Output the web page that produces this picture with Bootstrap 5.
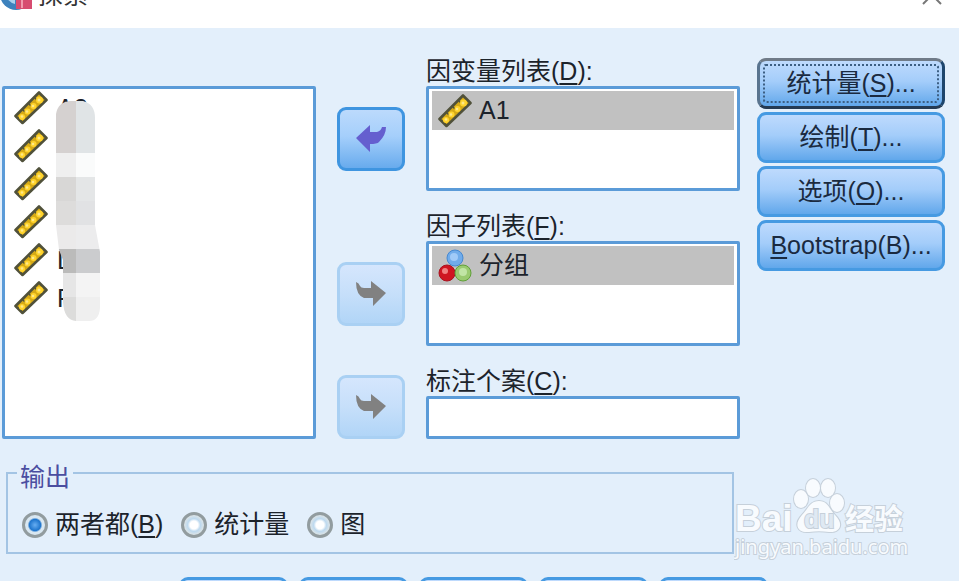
<!DOCTYPE html>
<html lang="zh-CN">
<head>
<meta charset="utf-8">
<meta name="viewport" content="width=device-width, initial-scale=1">
<title>探索</title>
<link href="https://cdn.jsdelivr.net/npm/bootstrap@5.3.0/dist/css/bootstrap.min.css" rel="stylesheet">
<style>
  body { background: #e3effb; font-family: "Liberation Sans", "Noto Sans CJK SC", sans-serif; font-size: 25px; line-height: 29px; color: #1c232b; }
  u { text-decoration-thickness: 2px; text-underline-offset: 3px; text-decoration-skip-ink: none; }
  .title-strip { height: 28px; padding-bottom: 18px; color: #333; }
  .title-strip button { line-height: 0; padding-right: 17px; }
  .dialog-body { padding: 29px 14px 0 2px; gap: 17px; }
  .transfer { display: grid; grid-template-columns: minmax(0, 1fr) 68px minmax(0, 1fr); grid-template-rows: 134px 134px 72px; gap: 21px; }
  .source { grid-row: 1 / 4; margin-top: 29px; }
  .well { background: #fff; border: 3px solid #5b9bd8; border-radius: 2px; }
  .pick-list { height: 105px; }
  .source li { height: 38px; padding-left: 9px; gap: 9px; }
  .mosaic { left: 51px; top: 11px; }
  .picked { background: #c1c1c1; height: 39px; margin: 2px 3px 0; padding-left: 6px; gap: 7px; }
  .case-input { height: 43px; padding: 0 8px; }
  .case-input:focus { outline: none; }
  .move { height: 64px; border: 3px solid #3f95e0; border-radius: 9px; background: linear-gradient(#bcdafc, #a5cffb 45%, #68abed); align-self: start; margin-top: 50px; }
  .move:disabled { border-color: #a9d0f3; background: linear-gradient(#d5e6fd, #c6dffa 50%, #b1d5f7); }
  .move.last { align-self: end; margin-top: 0; }
  .side { width: 188px; gap: 3px; padding-top: 1px; }
  .glossy { height: 51px; border: 3px solid #469ae2; border-radius: 9px; color: #1a2a40; background: linear-gradient(#bedafd, #a4cdfa 45%, #61a7eb); }
  .glossy.current { border-color: #707b88 #1d456c #253b53 #59748f; outline: 2px dotted #3c5f83; outline-offset: -8px; }
  .output { border: 2px solid #a3c4e4; margin: 19px 6px 0 4px; padding: 0 14px 13px; }
  .output legend { color: #4b4ea0; font-size: 25px; line-height: 19px; padding: 10px 3px 0; margin-left: -5px; margin-bottom: 23px; }
  .output input { appearance: none; width: 26px; height: 26px; border: 3px solid #929c9f; border-radius: 50%; background: radial-gradient(#fff 0 28%, #bdd9ef 45%, #dce4e7 70%); }
  .output input:checked { background: radial-gradient(#67aef2 0, #1e75cd 40%, #d9e7f1 52%); }
  .output label { gap: 7px; }
  .output .choices { gap: 18px; }
  .actions { gap: 11px; padding: 23px 13px 0 0; }
  .actions button { width: 109px; }
  .brand-overlay { right: 49px; bottom: 18px; }
</style>
<script src="https://cdn.jsdelivr.net/npm/bootstrap@5.3.0/dist/js/bootstrap.bundle.min.js"></script>
</head>
<body class="vh-100 overflow-hidden position-relative">
<svg class="d-none">
  <symbol id="ruler" viewBox="0 0 34 34">
    <path d="M25 1.500 32.500 9 8.500 32 1.500 25Z" fill="#d6aa16" stroke="#50513a" stroke-width="2.600" stroke-linejoin="round"/>
    <path d="M21 7l2 2M15 13l2 2M9 19l2 2" stroke="#50513a" stroke-width="1.500"/>
    <g fill="#ffd42e"><circle cx="25.500" cy="9" r="3.500"/><circle cx="19.500" cy="15" r="3"/><circle cx="13.500" cy="20.500" r="3"/><circle cx="8" cy="26" r="3"/></g>
    <g fill="#ffe98a"><circle cx="25" cy="9" r="1.500"/><circle cx="19" cy="15" r="1.300"/><circle cx="13" cy="20.500" r="1.300"/><circle cx="8" cy="25.500" r="1.300"/></g>
  </symbol>
  <symbol id="forward" viewBox="0 0 32 28"><path d="M1 2Q4 3 5 6 6 8 9 8H16V1L31 13 18 26V18H9Q1 15 1 2Z" fill="#818181"/></symbol>
</svg>

<header class="title-strip bg-white d-flex align-items-end justify-content-between overflow-hidden">
  <div class="d-flex align-items-end">
    <svg width="38" height="32" viewBox="0 0 38 32"><circle cx="16" cy="16" r="16" fill="#3d82bd"/><path d="M3 15q6 10 12 11V5Z" fill="#a7d2ef"/><path d="M16 14h16v17H16Z" fill="#d74c70"/><path d="M17 21h14M22 15v15" stroke="#f09aae" stroke-width="2"/></svg>
    <span>探索</span>
  </div>
  <button type="button" class="border-0 bg-transparent" aria-label="关闭"><svg width="20" height="26" viewBox="0 0 20 26"><path d="M1 3l18 18M19 3 1 21" stroke="#777" stroke-width="2"/></svg></button>
</header>

<main class="dialog-body d-flex align-items-start">
  <div class="flex-grow-1">
    <div class="transfer">
      <div class="source well position-relative">
        <ul class="list-unstyled m-0">
          <li class="d-flex align-items-center"><svg width="34" height="34"><use href="#ruler"/></svg>A2</li>
          <li class="d-flex align-items-center"><svg width="34" height="34"><use href="#ruler"/></svg></li>
          <li class="d-flex align-items-center"><svg width="34" height="34"><use href="#ruler"/></svg></li>
          <li class="d-flex align-items-center"><svg width="34" height="34"><use href="#ruler"/></svg></li>
          <li class="d-flex align-items-center"><svg width="34" height="34"><use href="#ruler"/></svg>L</li>
          <li class="d-flex align-items-center"><svg width="34" height="34"><use href="#ruler"/></svg>F</li>
        </ul>
        <svg class="mosaic position-absolute" width="45" height="223" viewBox="0 0 45 223">
          <clipPath id="stroke-shape"><path d="M0 14Q2 2 14 1H27Q39 4 39 18V125L44 152V208Q43 221 33 221H20Q8 220 7 202V160L3 150 0 125Z"/></clipPath>
          <g clip-path="url(#stroke-shape)">
            <path fill="#d5d1d0" d="M0 0h20v53H0z"/><path fill="#e0e4e6" d="M20 0h25v53H20z"/>
            <path fill="#efefef" d="M0 53h20v24H0z"/><path fill="#fafbfb" d="M20 53h25v24H20z"/>
            <path fill="#d8d7d6" d="M0 77h20v24H0z"/><path fill="#e4e6e7" d="M20 77h25v24H20z"/>
            <path fill="#dddcdb" d="M0 101h20v24H0z"/><path fill="#e1e2e4" d="M20 101h25v24H20z"/>
            <path fill="#ebeaea" d="M0 125h20v24H0z"/><path fill="#ececed" d="M20 125h25v24H20z"/>
            <path fill="#bbbbba" d="M0 149h20v24H0z"/><path fill="#cbccce" d="M20 149h25v24H20z"/>
            <path fill="#e6e6e6" d="M0 173h20v24H0z"/><path fill="#f4f4f4" d="M20 173h25v24H20z"/>
            <path fill="#dcdcdb" d="M0 197h20v26H0z"/><path fill="#efefef" d="M20 197h25v26H20z"/>
          </g>
        </svg>
      </div>

      <button type="button" class="move d-flex align-items-center justify-content-center" aria-label="移出"><svg width="32" height="30" viewBox="0 0 32 30"><path d="M1 14 15 1V8H22Q26 7 27 3H31Q31 11 24 18 22 20 15 20V28Z" fill="#655fcf"/></svg></button>
      <section>
        <div id="dep">因变量列表(<u>D</u>):</div>
        <div class="well pick-list" role="listbox" aria-labelledby="dep">
          <div class="picked d-flex align-items-center" role="option" aria-selected="true"><svg width="34" height="34"><use href="#ruler"/></svg>A1</div>
        </div>
      </section>

      <button type="button" class="move d-flex align-items-center justify-content-center" disabled aria-label="移入因子"><svg width="32" height="28"><use href="#forward"/></svg></button>
      <section>
        <div id="factor">因子列表(<u>F</u>):</div>
        <div class="well pick-list" role="listbox" aria-labelledby="factor">
          <div class="picked d-flex align-items-center" role="option" aria-selected="true"><svg width="34" height="34" viewBox="0 0 34 34"><circle cx="17" cy="9" r="8" fill="#70aceb" stroke="#4688d0"/><circle cx="16" cy="8" r="4" fill="#a0caf8"/><circle cx="9" cy="24" r="8" fill="#cf1520" stroke="#a91320"/><circle cx="7" cy="22" r="3" fill="#f08080"/><circle cx="25" cy="24" r="8" fill="#9aca70" stroke="#60a038"/><circle cx="25" cy="23" r="4" fill="#c1e5a5"/></svg>分组</div>
        </div>
      </section>

      <button type="button" class="move last d-flex align-items-center justify-content-center" disabled aria-label="移入个案"><svg width="32" height="28"><use href="#forward"/></svg></button>
      <section>
        <label class="d-block" for="case">标注个案(<u>C</u>):</label>
        <input id="case" type="text" class="case-input well d-block w-100">
      </section>
    </div>

    <fieldset class="output">
      <legend class="w-auto float-none">输出</legend>
      <div class="choices d-flex">
        <label class="d-flex align-items-center"><input type="radio" name="out" checked><span>两者都(<u>B</u>)</span></label>
        <label class="d-flex align-items-center"><input type="radio" name="out"><span>统计量</span></label>
        <label class="d-flex align-items-center"><input type="radio" name="out"><span>图</span></label>
      </div>
    </fieldset>
  </div>

  <div class="side d-flex flex-column flex-shrink-0">
    <button type="button" class="glossy current p-0">统计量(<u>S</u>)...</button>
    <button type="button" class="glossy p-0">绘制(<u>T</u>)...</button>
    <button type="button" class="glossy p-0">选项(<u>O</u>)...</button>
    <button type="button" class="glossy p-0"><u>B</u>ootstrap(B)...</button>
  </div>
</main>

<footer class="actions d-flex justify-content-center">
  <button type="button" class="glossy" aria-label="确定"></button>
  <button type="button" class="glossy" aria-label="粘贴"></button>
  <button type="button" class="glossy" aria-label="重置"></button>
  <button type="button" class="glossy" aria-label="取消"></button>
  <button type="button" class="glossy" aria-label="帮助"></button>
</footer>

<svg class="brand-overlay position-absolute" width="176" height="86" viewBox="0 0 176 86" fill="#f8fbfe" stroke="#c6d0da" stroke-width="2" paint-order="stroke">
  <text x="1" y="54" font-size="37" font-weight="700">Bai</text>
  <ellipse cx="67" cy="22" rx="7" ry="9"/><ellipse cx="79" cy="11" rx="7" ry="9"/><ellipse cx="94" cy="11" rx="7" ry="9"/><ellipse cx="103" cy="26" rx="7" ry="9"/>
  <path d="M85 24c9 0 10 8 16 14 10 10 4 18-6 17-7-1-13-1-20 0-11 1-16-7-7-17 6-6 8-14 17-14Z"/>
  <text x="70" y="51" font-size="25" font-weight="700" fill="#dfe9f3">du</text>
  <text x="111" y="53" font-size="29" font-weight="700">经验</text>
  <text x="1" y="77" font-size="20" font-family="Noto Sans, sans-serif">jingyan.baidu.com</text>
</svg>
</body>
</html>
